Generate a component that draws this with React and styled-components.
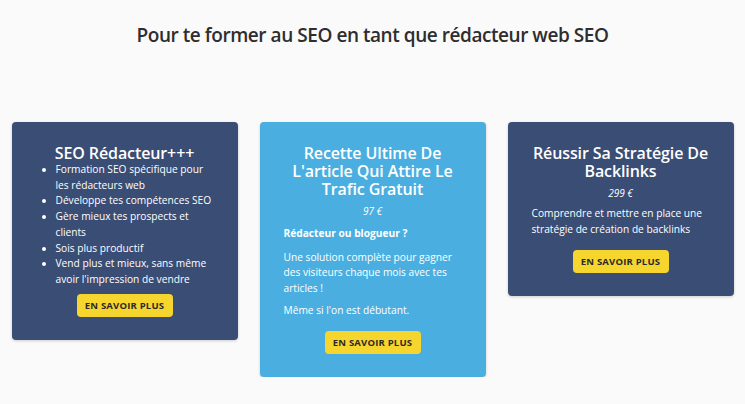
import React from "react";
import styled, { createGlobalStyle } from "styled-components";

const GlobalStyle = createGlobalStyle`
  body {
    margin: 0;
    background: #fafafa;
    font-family: "Open Sans", "Noto Sans", sans-serif;
  }
`;

const Page = styled.div`
  padding-top: 22px;
`;

const Heading = styled.h2`
  margin: 0;
  text-align: center;
  font-size: 19px;
  font-weight: 600;
  line-height: 26px;
  letter-spacing: -0.45px;
  color: #2e2e2e;
`;

const Row = styled.div`
  display: flex;
  justify-content: center;
  align-items: flex-start;
  gap: 22px;
  margin-top: 74px;
`;

const Card = styled.div`
  width: 226px;
  box-sizing: border-box;
  padding: 22px 24px 23px;
  border-radius: 4px;
  background: ${({ bg }) => bg};
  color: #fff;
  box-shadow: 0 1px 3px rgba(0, 0, 0, 0.18);
  display: flex;
  flex-direction: column;
`;

const Title = styled.h3`
  margin: 0;
  text-align: center;
  font-size: 16px;
  font-weight: 600;
  line-height: 18px;
  letter-spacing: -0.1px;
`;

const Price = styled.div`
  text-align: center;
  font-style: italic;
  font-size: 10px;
  line-height: 14px;
  margin-top: 6px;
`;

const List = styled.ul`
  margin: 0;
  padding-left: 20px;
  font-size: 10.2px;
  line-height: 15.7px;
`;

const Text = styled.p`
  margin: ${({ mt }) => mt || "8px"} 0 0;
  font-size: 10.2px;
  line-height: 15.5px;
  font-weight: ${({ bold }) => (bold ? 700 : 400)};
`;

const Button = styled.button`
  align-self: center;
  margin-top: ${({ mt }) => mt || "13px"};
  width: 96px;
  height: 23px;
  padding: 0;
  border: none;
  border-radius: 4px;
  background: #f6d52f;
  color: #2a2a2a;
  font-family: inherit;
  font-size: 9.5px;
  font-weight: 700;
  letter-spacing: 0.2px;
  cursor: pointer;
`;

export default function App() {
  return (
    <Page>
      <GlobalStyle />
      <Heading>Pour te former au SEO en tant que rédacteur web SEO</Heading>
      <Row>
        <Card bg="#3a4d74">
          <Title>SEO Rédacteur+++</Title>
          <List>
            <li>Formation SEO spécifique pour les rédacteurs web</li>
            <li>Développe tes compétences SEO</li>
            <li>Gère mieux tes prospects et clients</li>
            <li>Sois plus productif</li>
            <li>Vend plus et mieux, sans même avoir l'impression de vendre</li>
          </List>
          <Button mt="6px">EN SAVOIR PLUS</Button>
        </Card>
        <Card bg="#4aafe0">
          <Title>Recette Ultime De L'article Qui Attire Le Trafic Gratuit</Title>
          <Price>97 €</Price>
          <Text bold mt="8px">Rédacteur ou blogueur ?</Text>
          <Text>Une solution complète pour gagner des visiteurs chaque mois avec tes articles !</Text>
          <Text mt="7px">Même si l'on est débutant.</Text>
          <Button mt="12px">EN SAVOIR PLUS</Button>
        </Card>
        <Card bg="#3a4d74">
          <Title>Réussir Sa Stratégie De Backlinks</Title>
          <Price>299 €</Price>
          <Text mt="6px">Comprendre et mettre en place une stratégie de création de backlinks</Text>
          <Button>EN SAVOIR PLUS</Button>
        </Card>
      </Row>
    </Page>
  );
}
